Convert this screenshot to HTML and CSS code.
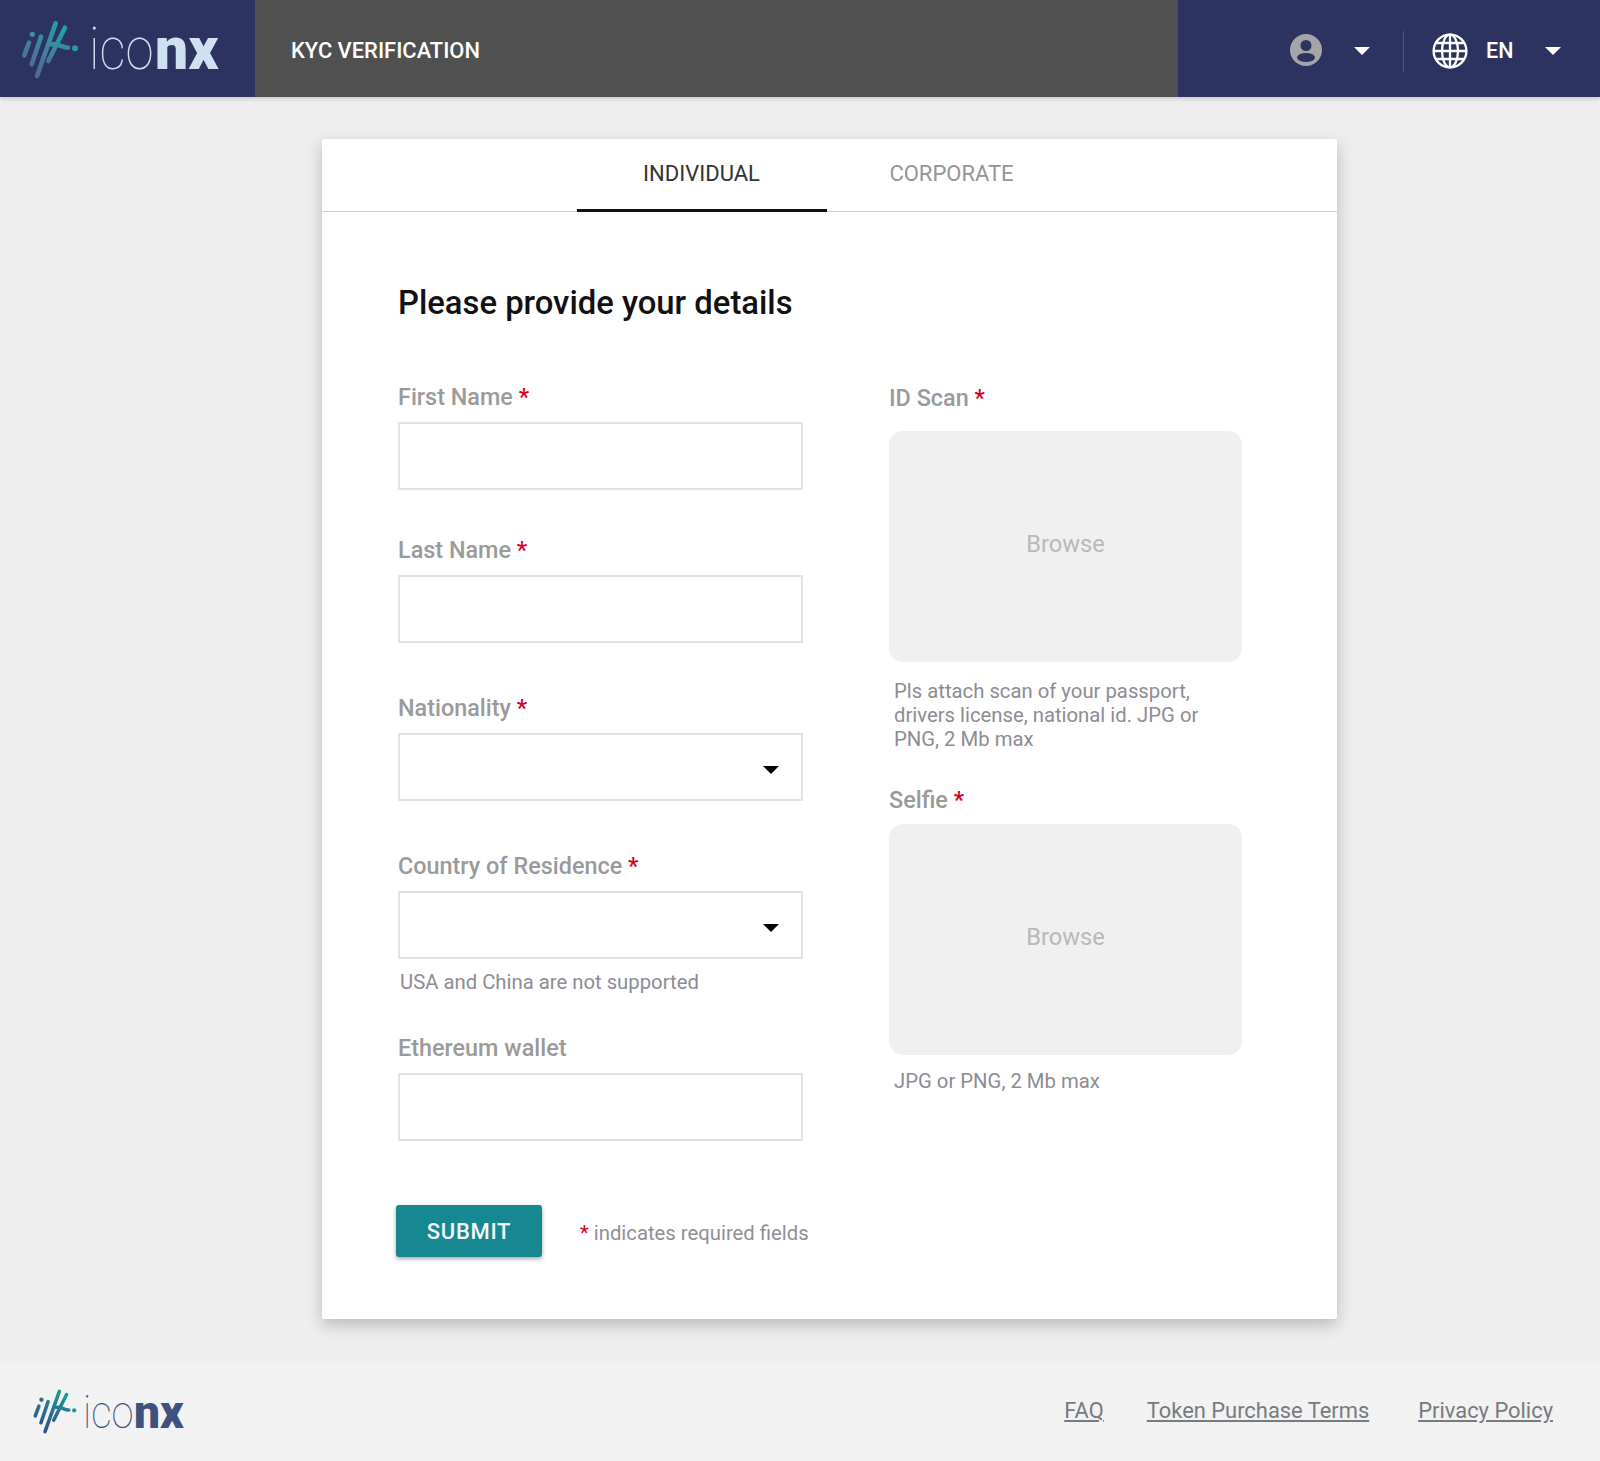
FILE: index.html
```html
<!DOCTYPE html>
<html lang="en">
<head>
    <title>KYC Verification</title>
    <meta charset="UTF-8" />
    <link rel="stylesheet" href="styles.css">
</head>
<body>
    <header class="topbar">
        <div class="brand">
            <svg class="pulse" viewBox="0 0 60 60" fill="none" stroke-linecap="round">
                <defs>
                    <linearGradient id="pulseTop" gradientUnits="userSpaceOnUse" x1="14" y1="56" x2="36" y2="6">
                        <stop offset="0" stop-color="#50689a"/>
                        <stop offset="0.5" stop-color="#437f9f"/>
                        <stop offset="1" stop-color="#1fa3a6"/>
                    </linearGradient>
                </defs>
                <g stroke="url(#pulseTop)" stroke-width="4.6">
                    <path d="M4.3 36.3 L9 23.7"/>
                    <path d="M11.7 45.3 L21 17.7"/>
                    <path d="M17 57 L35.7 4.3"/>
                    <path d="M28.3 42 L45 8.7"/>
                    <path d="M31.7 25.3 C38 24 42 28.7 48 28.7"/>
                </g>
                <circle cx="12.3" cy="15.3" r="2.6" fill="#3f8ea6"/>
                <circle cx="55" cy="29.3" r="3" fill="#2a9aa6"/>
            </svg>
            <span class="wordmark"><span class="ico">ico</span><span class="nx">nx</span></span>
        </div>
        <div class="page-title">KYC VERIFICATION</div>
        <div class="user-area">
            <svg class="avatar" viewBox="0 0 32 32">
                <circle cx="16" cy="16" r="16" fill="#a5a5a7"/>
                <circle cx="16" cy="11.5" r="5.5" fill="#2c3360"/>
                <ellipse cx="16" cy="23.5" rx="9" ry="4.6" fill="#2c3360"/>
            </svg>
            <span class="caret caret-white"></span>
            <span class="divider"></span>
            <svg class="globe" viewBox="0 0 36 36" fill="none" stroke="#fff" stroke-width="2.3">
                <circle cx="18" cy="18" r="16.4"/>
                <ellipse cx="18" cy="18" rx="8" ry="16.4"/>
                <path d="M18 1.5V34.5M1.5 18H34.5M4 10H32M4 26H32"/>
            </svg>
            <span class="lang">EN</span>
            <span class="caret caret-white"></span>
        </div>
    </header>

    <main class="content">
        <section class="card">
            <nav class="tabs">
                <a class="tab active">INDIVIDUAL</a>
                <a class="tab">CORPORATE</a>
            </nav>
            <div class="card-body">
                <h1>Please provide your details</h1>
                <div class="columns">
                    <div class="col-left">
                        <div class="field field-first">
                            <label>First Name <em>*</em></label>
                            <div class="box"></div>
                        </div>
                        <div class="field field-select">
                            <label>Last Name <em>*</em></label>
                            <div class="box"></div>
                        </div>
                        <div class="field field-select">
                            <label>Nationality <em>*</em></label>
                            <div class="box"><span class="caret"></span></div>
                        </div>
                        <div class="field field-country">
                            <label>Country of Residence <em>*</em></label>
                            <div class="box"><span class="caret"></span></div>
                            <p class="hint">USA and China are not supported</p>
                        </div>
                        <div class="field">
                            <label>Ethereum wallet</label>
                            <div class="box"></div>
                        </div>
                    </div>
                    <div class="col-right">
                        <div class="upload upload-id">
                            <label>ID Scan <em>*</em></label>
                            <div class="dropzone">Browse</div>
                            <p class="hint">Pls attach scan of your passport, drivers license, national id. JPG or PNG, 2 Mb max</p>
                        </div>
                        <div class="upload upload-selfie">
                            <label>Selfie <em>*</em></label>
                            <div class="dropzone">Browse</div>
                            <p class="hint">JPG or PNG, 2 Mb max</p>
                        </div>
                    </div>
                </div>
                <div class="actions">
                    <button class="submit">SUBMIT</button>
                    <span class="required-note"><em>*</em> indicates required fields</span>
                </div>
            </div>
        </section>
    </main>

    <footer class="footer">
        <div class="brand brand-small">
            <svg class="pulse" viewBox="0 0 60 60" fill="none" stroke-linecap="round">
                <defs>
                    <linearGradient id="pulseBottom" gradientUnits="userSpaceOnUse" x1="14" y1="56" x2="36" y2="6">
                        <stop offset="0" stop-color="#2f4f85"/>
                        <stop offset="0.5" stop-color="#2a6f92"/>
                        <stop offset="1" stop-color="#179a95"/>
                    </linearGradient>
                </defs>
                <g stroke="url(#pulseBottom)" stroke-width="4.6">
                    <path d="M4.3 36.3 L9 23.7"/>
                    <path d="M11.7 45.3 L21 17.7"/>
                    <path d="M17 57 L35.7 4.3"/>
                    <path d="M28.3 42 L45 8.7"/>
                    <path d="M31.7 25.3 C38 24 42 28.7 48 28.7"/>
                </g>
                <circle cx="12.3" cy="15.3" r="2.8" fill="#2a6f92"/>
                <circle cx="55" cy="29.3" r="2.8" fill="#179a95"/>
            </svg>
            <span class="wordmark"><span class="ico">ico</span><span class="nx">nx</span></span>
        </div>
        <div class="footer-links">
            <a class="link-faq">FAQ</a>
            <a class="link-terms">Token Purchase Terms</a>
            <a>Privacy Policy</a>
        </div>
    </footer>
</body>
</html>
```

FILE: styles.css
```css
* {
    box-sizing: border-box;
}
body {
    margin: 0;
    min-height: 1461px;
    display: flex;
    flex-direction: column;
    background-color: #eeeeee;
    font-family: Roboto, "Liberation Sans", sans-serif;
}
em {
    font-style: normal;
    color: #d9001b;
}

/* top bar */
.topbar {
    height: 97px;
    display: flex;
    background-color: #2c3360;
    box-shadow: 0 2px 4px rgba(0, 0, 0, 0.15);
}
.brand {
    width: 255px;
    display: flex;
    align-items: center;
    padding-left: 20px;
}
.pulse {
    width: 60px;
    height: 60px;
    flex: none;
}
.wordmark {
    margin-left: 9px;
    font-size: 60px;
    line-height: 1;
    color: #cfe1f1;
    white-space: nowrap;
}
.ico {
    display: inline-block;
    font-weight: 100;
    transform: scaleX(0.85);
    transform-origin: left;
    margin-right: -0.17em;
}
.nx {
    display: inline-block;
    font-weight: 900;
    transform: scaleX(0.98);
    transform-origin: left;
}
.page-title {
    width: 923px;
    padding: 4px 0 0 36px;
    display: flex;
    align-items: center;
    background-color: #505050;
    color: #fff;
    font-size: 21.9px;
    font-weight: 500;
}
.user-area {
    flex: 1;
    display: flex;
    align-items: center;
    padding: 4px 0 0 112px;
}
.avatar {
    width: 32px;
    height: 32px;
    margin-bottom: 2px;
}
.caret {
    width: 0;
    height: 0;
    border-left: 8px solid transparent;
    border-right: 8px solid transparent;
    border-top: 8px solid #000;
}
.caret-white {
    border-top-color: #fff;
    margin-left: 32px;
}
.divider {
    width: 1px;
    height: 41px;
    margin: 2px 28px 0 33px;
    background-color: #4a5282;
}
.globe {
    width: 36px;
    height: 36px;
}
.lang {
    margin-left: 18px;
    width: 28px;
    color: #fff;
    font-size: 21.5px;
    font-weight: 500;
}
.lang + .caret-white {
    margin-left: 31px;
}

/* card */
.content {
    flex: 1;
    padding: 42px 0 42px 322px;
}
.card {
    width: 1015px;
    height: 1180px;
    background-color: #fff;
    border-radius: 2px;
    box-shadow: 0 6px 16px rgba(0, 0, 0, 0.22);
}
.tabs {
    height: 73px;
    display: flex;
    padding-left: 254.5px;
    border-bottom: 1px solid #cfcfcf;
}
.tab {
    width: 250px;
    height: 73px;
    padding-top: 22px;
    text-align: center;
    color: #959595;
    font-size: 22px;
    font-weight: 400;
}
.tab.active {
    color: #333;
    border-bottom: 3px solid #111;
}
.card-body {
    padding: 69px 0 0 76px;
}
h1 {
    margin: 0 0 57px;
    height: 44px;
    color: #111;
    font-size: 32.8px;
    line-height: 44px;
    font-weight: 500;
}
.columns {
    display: grid;
    grid-template-columns: 405px 353px;
    column-gap: 86px;
}
label {
    display: block;
    height: 30px;
    color: #9a9a9a;
    font-size: 23.4px;
    line-height: 30px;
    font-weight: 500;
}
.field label {
    margin-bottom: 10px;
}
.box {
    height: 68px;
    background-color: #fff;
    border: 2px solid #e3e3e3;
    display: flex;
    align-items: center;
    justify-content: flex-end;
    padding: 5px 22px 0 0;
}
.field-first {
    margin-bottom: 45px;
}
.field-select {
    margin-bottom: 50px;
}
.field-country {
    margin-bottom: 39px;
}
.hint {
    margin: 11px 0 0 2px;
    color: #8c8c94;
    font-size: 20.3px;
    line-height: 24px;
}
.upload label {
    margin-bottom: 9px;
}
.col-right {
    padding-top: 1px;
}
.upload .hint {
    margin: 17px 0 0 5px;
}
.upload-id {
    margin-bottom: 34px;
}
.upload-id label {
    margin-bottom: 18px;
}
.upload-selfie .hint {
    margin-top: 14px;
}
.dropzone {
    height: 231px;
    display: flex;
    align-items: center;
    justify-content: center;
    padding-bottom: 6px;
    background-color: #f0f0f0;
    border-radius: 14px;
    color: #b9b9b9;
    font-size: 23.7px;
}
.actions {
    margin: 64px 0 0 -2px;
    display: flex;
    align-items: center;
}
.submit {
    width: 146px;
    height: 52px;
    border: none;
    border-radius: 3px;
    background-color: #178892;
    color: #f2f8f8;
    font-family: inherit;
    font-size: 22px;
    font-weight: 500;
    letter-spacing: 0.7px;
    box-shadow: 0 2px 4px rgba(0, 0, 0, 0.35);
}
.required-note {
    margin: 4px 0 0 38px;
    color: #8f8f97;
    font-size: 20.3px;
}

/* footer */
.footer {
    height: 100px;
    display: flex;
    align-items: center;
    justify-content: space-between;
    padding-right: 47px;
    background-color: #f2f2f3;
}
.brand-small {
    padding-left: 32px;
}
.brand-small .pulse {
    width: 46px;
    height: 46px;
}
.brand-small .wordmark {
    margin-left: 5px;
    font-size: 47px;
    color: #3f5180;
}
.footer-links {
    display: flex;
    margin-bottom: 1px;
}
.footer-links a {
    color: #777b80;
    font-size: 21.9px;
    text-decoration: underline;
}
.link-faq {
    margin-right: 43px;
}
.link-terms {
    margin-right: 49px;
}
```
